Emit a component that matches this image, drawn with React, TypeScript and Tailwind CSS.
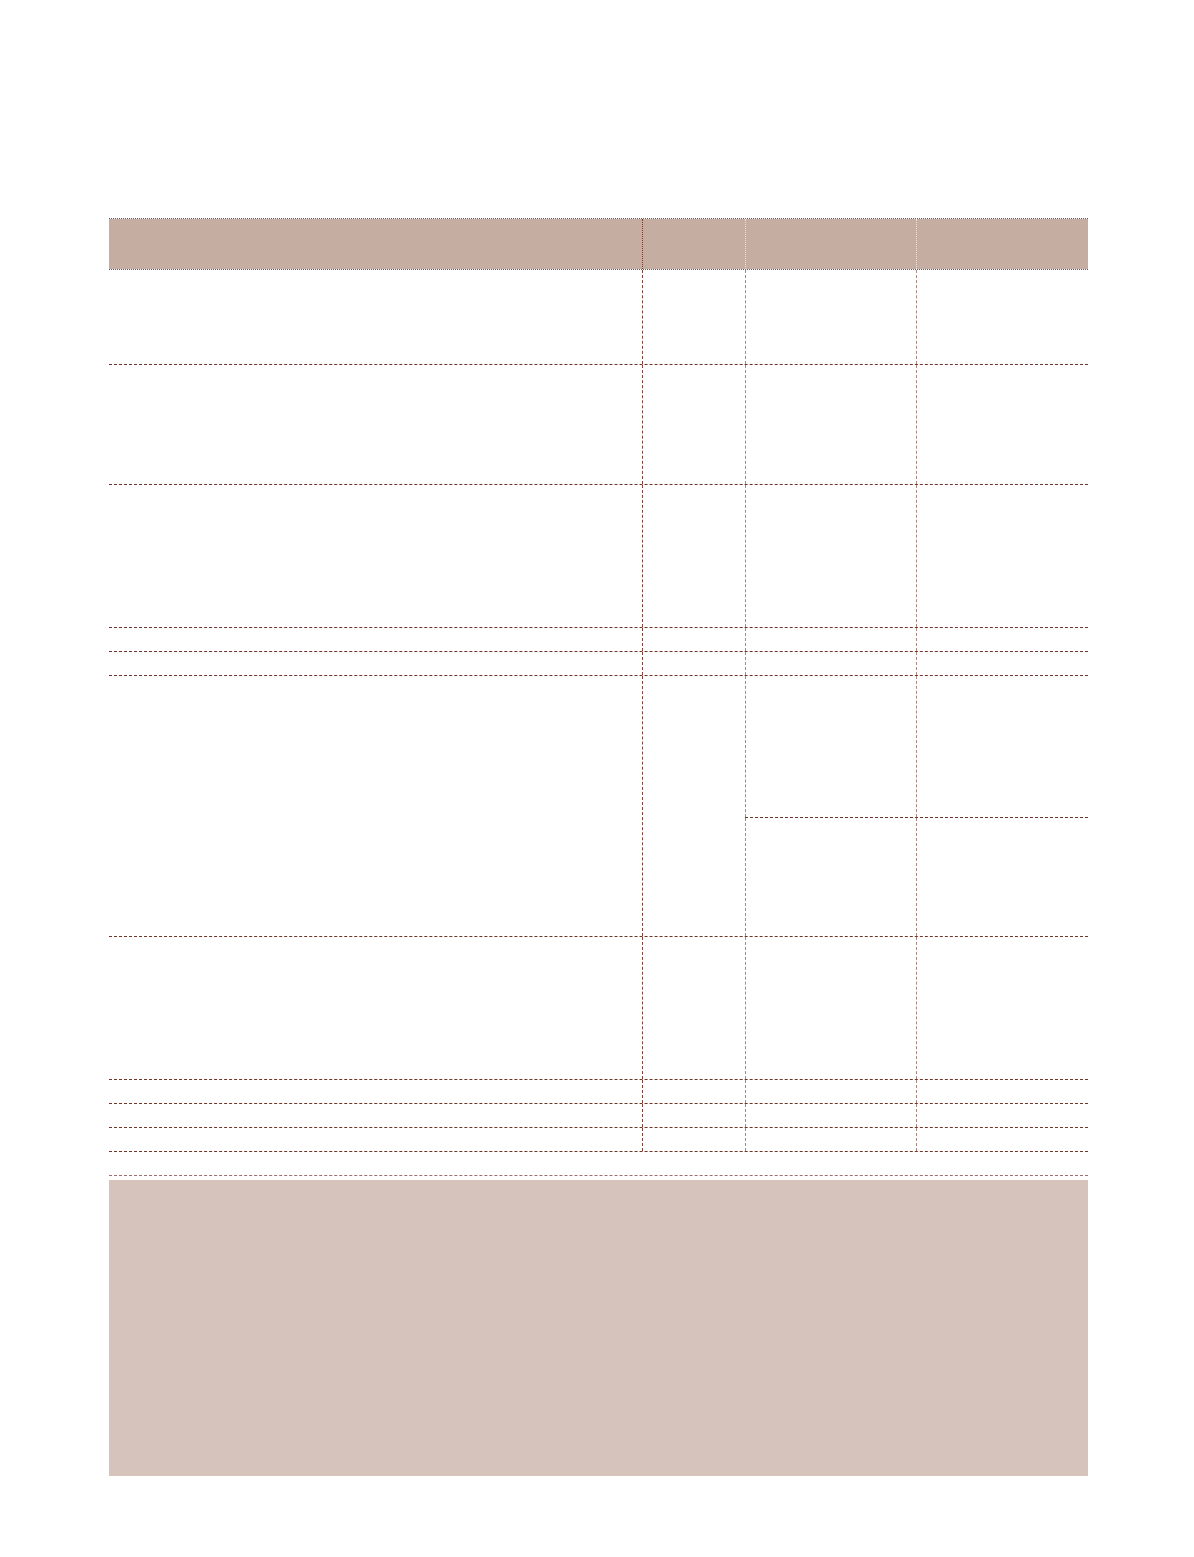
import React from "react";

const H = "border-[#6f3628]";
const cols = "grid grid-cols-[533px_103px_171px_172px]";

function Row({ h }: { h: number }) {
  return (
    <div className={`${cols} border-b border-dashed ${H}`} style={{ height: h }}>
      <div />
      <div className="border-l border-dashed border-[#7e4436]" />
      <div className="border-l border-dashed border-[#a8877e]" />
      <div className="border-l border-dashed border-[#a8877e]" />
    </div>
  );
}

export default function App() {
  return (
    <div className="min-h-[1557px] w-[1194px] bg-white pt-[218px] font-['Liberation_Sans',sans-serif]">
      <div className="ml-[109px] w-[979px]">
        <div className={`${cols} h-[52px] bg-[#c6ada1] bg-clip-padding border-y border-dotted border-[#7e5448]`}>
          <div />
          <div className="border-l border-dotted border-[#7b3f30]" />
          <div className="border-l border-dotted border-[#ece2de]" />
          <div className="border-l border-dotted border-[#ece2de]" />
        </div>
        <Row h={95} />
        <Row h={120} />
        <Row h={143} />
        <Row h={24} />
        <Row h={24} />
        <div className={`${cols} h-[261px] border-b border-dashed ${H}`}>
          <div />
          <div className="border-l border-dashed border-[#7e4436]" />
          <div className="col-span-2 flex flex-col">
            <div className={`h-[142px] border-b border-dashed ${H} grid grid-cols-[171px_172px]`}>
              <div className="border-l border-dashed border-[#a8877e]" />
              <div className="border-l border-dashed border-[#a8877e]" />
            </div>
            <div className="flex-1 grid grid-cols-[171px_172px]">
              <div className="border-l border-dashed border-[#a8877e]" />
              <div className="border-l border-dashed border-[#a8877e]" />
            </div>
          </div>
        </div>
        <Row h={143} />
        <Row h={24} />
        <Row h={24} />
        <Row h={24} />
        <div className="h-[24px] border-b border-dashed border-[#9c7268]" />
        <div className="mt-[4px] h-[296px] bg-[#d6c3bb]" />
      </div>
    </div>
  );
}
